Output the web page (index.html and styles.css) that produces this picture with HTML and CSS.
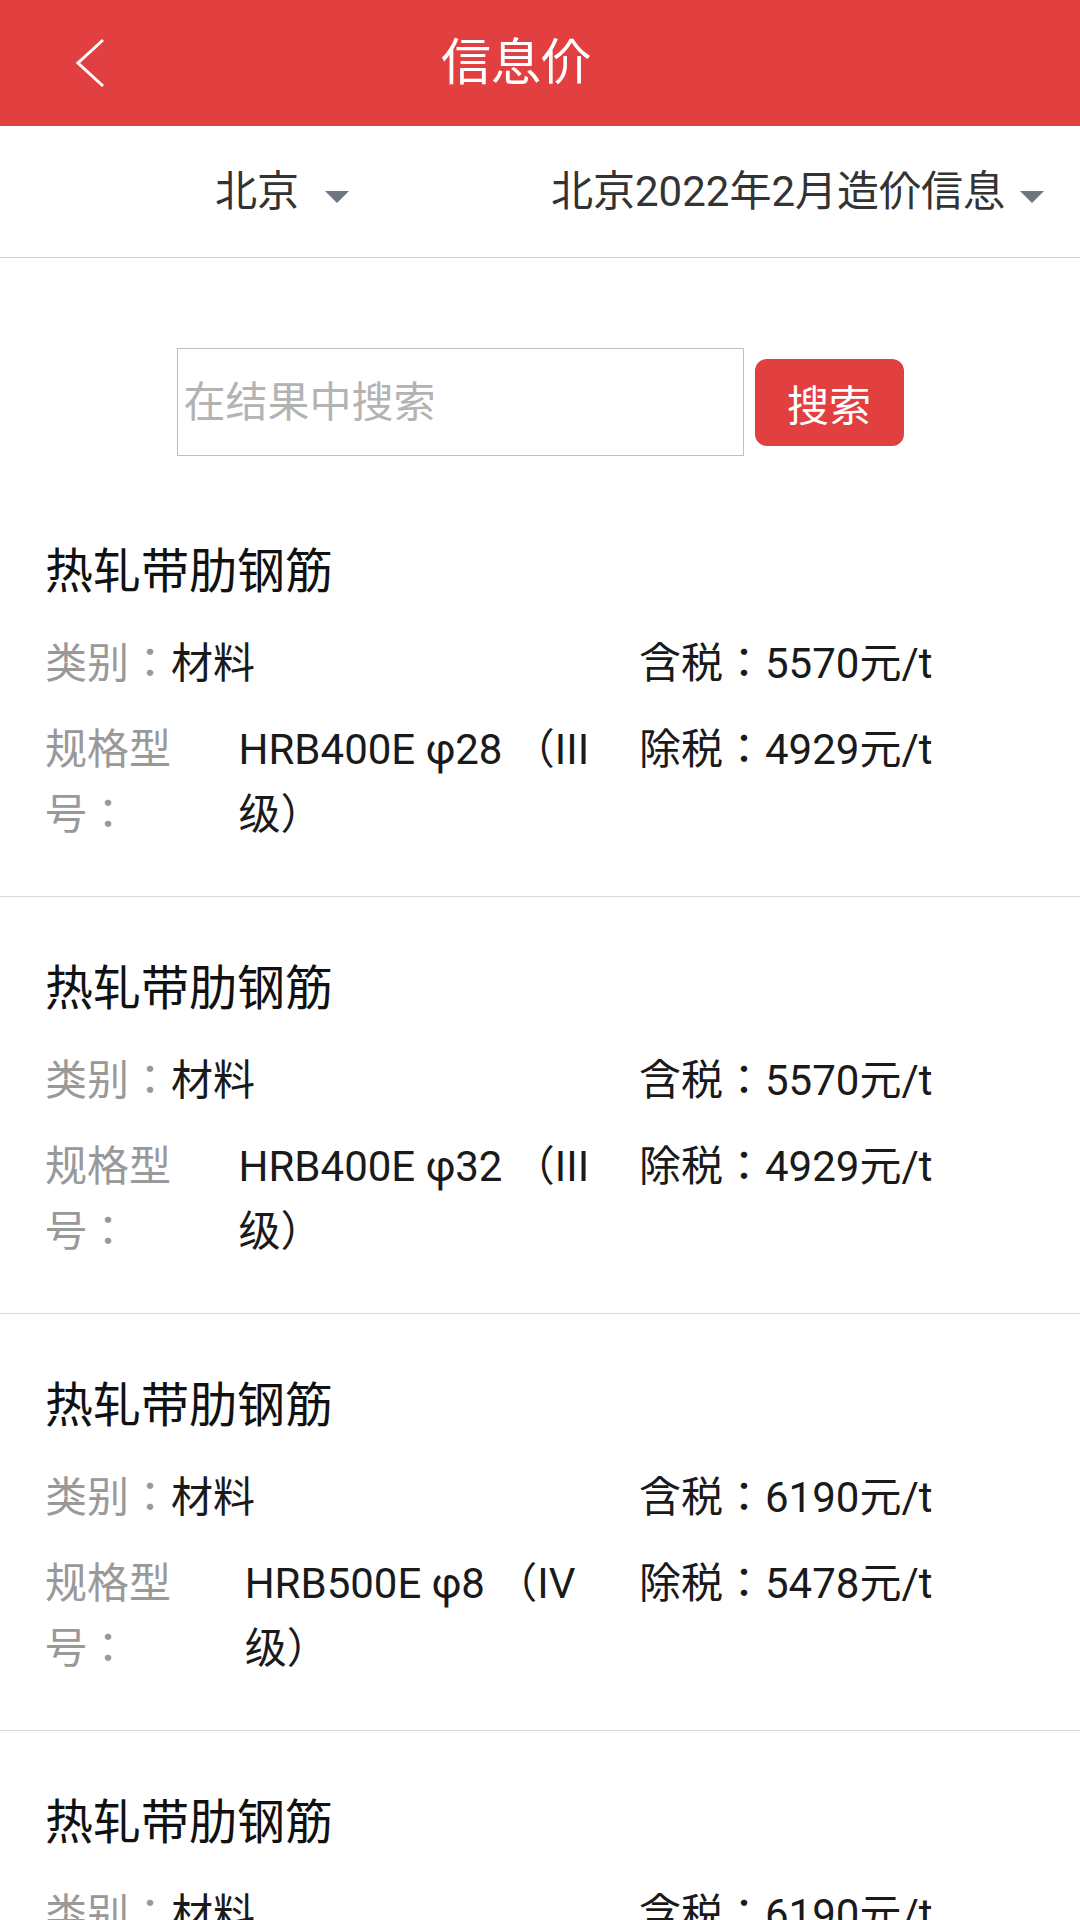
FILE: index.html
```html
<!doctype html>
<html lang="zh-CN">
	<head>
		<meta charset="UTF-8">
		<meta name="viewport" content="width=device-width, initial-scale=1.0">
		<title>信息价</title>
		<link rel="stylesheet" href="styles.css">
	</head>
	<body>

		<div class="topbar">
			<a class="back" href="#">
				<svg width="30" height="50" viewBox="0 0 30 50"><polyline points="27,2 2,25 27,48" fill="none" stroke="#fff" stroke-width="3"/></svg>
			</a>
			<h1 class="titulo">信息价</h1>
			<span></span>
		</div>

		<div class="filtro">
			<div class="drop drop-cidade">北京<i class="seta"></i></div>
			<div class="drop">北京2022年2月造价信息<i class="seta"></i></div>
		</div>

		<div class="busca">
			<input type="text" class="campo" placeholder="在结果中搜索">
			<button class="btbusca">搜索</button>
		</div>

		<ul class="lista">
			<li class="item">
				<div class="nome">热轧带肋钢筋</div>
				<div class="linha">
					<div class="cel"><span class="rot">类别：</span><span class="val">材料</span></div>
					<div class="cel">含税：5570元/t</div>
				</div>
				<div class="linha">
					<div class="cel"><span class="rot">规格型号：</span><span class="val">HRB400E φ28 （III级）</span></div>
					<div class="cel">除税：4929元/t</div>
				</div>
			</li>
			<li class="item">
				<div class="nome">热轧带肋钢筋</div>
				<div class="linha">
					<div class="cel"><span class="rot">类别：</span><span class="val">材料</span></div>
					<div class="cel">含税：5570元/t</div>
				</div>
				<div class="linha">
					<div class="cel"><span class="rot">规格型号：</span><span class="val">HRB400E φ32 （III级）</span></div>
					<div class="cel">除税：4929元/t</div>
				</div>
			</li>
			<li class="item">
				<div class="nome">热轧带肋钢筋</div>
				<div class="linha">
					<div class="cel"><span class="rot">类别：</span><span class="val">材料</span></div>
					<div class="cel">含税：6190元/t</div>
				</div>
				<div class="linha">
					<div class="cel"><span class="rot">规格型号：</span><span class="val">HRB500E φ8 （IV级）</span></div>
					<div class="cel">除税：5478元/t</div>
				</div>
			</li>
			<li class="item">
				<div class="nome">热轧带肋钢筋</div>
				<div class="linha">
					<div class="cel"><span class="rot">类别：</span><span class="val">材料</span></div>
					<div class="cel">含税：6190元/t</div>
				</div>
				<div class="linha">
					<div class="cel"><span class="rot">规格型号：</span><span class="val">HRB500E φ10 （IV级）</span></div>
					<div class="cel">除税：5478元/t</div>
				</div>
			</li>
		</ul>

	</body>
</html>
```

FILE: styles.css
```css
body{
	margin: 0;
	font-family: Roboto, "Noto Sans CJK JP", sans-serif;
	font-feature-settings: "locl" 0;
	color: #1a1a1a;
	background: #fff;
	text-spacing-trim: space-all;
}

.topbar{
	display: grid;
	grid-template-columns: 180px 1fr 228px;
	align-items: center;
	height: 126px;
	background: #e13f40;
}

.back{
	display: flex;
	padding-left: 76px;
}

.titulo{
	margin: 0;
	font-size: 50px;
	font-weight: normal;
	line-height: 64px;
	text-align: center;
	color: #fff;
}

.filtro{
	display: flex;
	justify-content: space-between;
	align-items: center;
	height: 131px;
	padding: 0 36px 0 215px;
	border-bottom: 1px solid #d2d2d2;
}

.drop{
	display: flex;
	align-items: center;
	gap: 15px;
	font-size: 42px;
	line-height: 60px;
	color: #333;
}

.drop-cidade{
	gap: 26px;
}

.seta{
	width: 0;
	height: 0;
	margin-top: 11px;
	border-left: 12px solid transparent;
	border-right: 12px solid transparent;
	border-top: 12px solid #6e7780;
}

.busca{
	display: flex;
	justify-content: center;
	align-items: center;
	gap: 11px;
	padding: 90px 0 24px;
}

.campo{
	box-sizing: border-box;
	width: 567px;
	height: 108px;
	margin: 0;
	padding: 0 6px;
	border: 1px solid #bfbfbf;
	border-radius: 0;
	font-family: inherit;
	font-size: 42px;
	color: #1a1a1a;
	outline: none;
}

.campo::placeholder{
	color: #b3b3b3;
}

.btbusca{
	width: 149px;
	height: 87px;
	margin: 0;
	padding: 0;
	border: none;
	border-radius: 12px;
	background: #e13f40;
	color: #fff;
	font-family: inherit;
	font-size: 42px;
}

.lista{
	list-style: none;
	margin: 0;
	padding: 0;
}

.item{
	height: 416px;
	box-sizing: content-box;
	padding: 0 45px;
	border-bottom: 1px solid #d9d9d9;
	overflow: hidden;
}

.nome{
	padding: 60px 0 6px;
	font-size: 48px;
	line-height: 64px;
	color: #111;
}

.linha{
	display: grid;
	grid-template-columns: 60% 40%;
	margin-top: 21px;
	font-size: 42px;
	line-height: 65px;
}

.cel{
	display: flex;
}

.rot{
	color: #999;
}
```
